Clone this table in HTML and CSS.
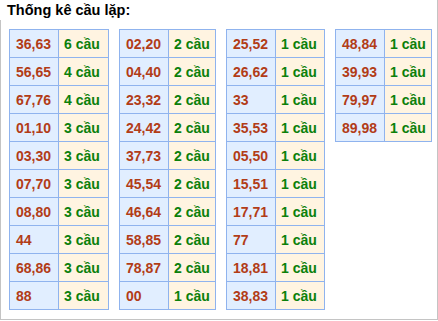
FILE: index.html
```html
<!DOCTYPE html>
<html lang="vi">
<head>
<meta charset="utf-8">
<link rel="stylesheet" href="styles.css">
</head>
<body>
<div class="box">
  <div class="title">Thống kê cầu lặp:</div>
  <div class="tables">
    <table class="t t1">
      <tr><td class="n">36,63</td><td class="c">6 cầu</td></tr>
      <tr><td class="n">56,65</td><td class="c">4 cầu</td></tr>
      <tr><td class="n">67,76</td><td class="c">4 cầu</td></tr>
      <tr><td class="n">01,10</td><td class="c">3 cầu</td></tr>
      <tr><td class="n">03,30</td><td class="c">3 cầu</td></tr>
      <tr><td class="n">07,70</td><td class="c">3 cầu</td></tr>
      <tr><td class="n">08,80</td><td class="c">3 cầu</td></tr>
      <tr><td class="n">44</td><td class="c">3 cầu</td></tr>
      <tr><td class="n">68,86</td><td class="c">3 cầu</td></tr>
      <tr><td class="n">88</td><td class="c">3 cầu</td></tr>
    </table>
    <table class="t t2">
      <tr><td class="n">02,20</td><td class="c">2 cầu</td></tr>
      <tr><td class="n">04,40</td><td class="c">2 cầu</td></tr>
      <tr><td class="n">23,32</td><td class="c">2 cầu</td></tr>
      <tr><td class="n">24,42</td><td class="c">2 cầu</td></tr>
      <tr><td class="n">37,73</td><td class="c">2 cầu</td></tr>
      <tr><td class="n">45,54</td><td class="c">2 cầu</td></tr>
      <tr><td class="n">46,64</td><td class="c">2 cầu</td></tr>
      <tr><td class="n">58,85</td><td class="c">2 cầu</td></tr>
      <tr><td class="n">78,87</td><td class="c">2 cầu</td></tr>
      <tr><td class="n">00</td><td class="c">1 cầu</td></tr>
    </table>
    <table class="t t3">
      <tr><td class="n">25,52</td><td class="c">1 cầu</td></tr>
      <tr><td class="n">26,62</td><td class="c">1 cầu</td></tr>
      <tr><td class="n">33</td><td class="c">1 cầu</td></tr>
      <tr><td class="n">35,53</td><td class="c">1 cầu</td></tr>
      <tr><td class="n">05,50</td><td class="c">1 cầu</td></tr>
      <tr><td class="n">15,51</td><td class="c">1 cầu</td></tr>
      <tr><td class="n">17,71</td><td class="c">1 cầu</td></tr>
      <tr><td class="n">77</td><td class="c">1 cầu</td></tr>
      <tr><td class="n">18,81</td><td class="c">1 cầu</td></tr>
      <tr><td class="n">38,83</td><td class="c">1 cầu</td></tr>
    </table>
    <table class="t t4">
      <tr><td class="n">48,84</td><td class="c">1 cầu</td></tr>
      <tr><td class="n">39,93</td><td class="c">1 cầu</td></tr>
      <tr><td class="n">79,97</td><td class="c">1 cầu</td></tr>
      <tr><td class="n">89,98</td><td class="c">1 cầu</td></tr>
    </table>
  </div>
</div>
</body>
</html>
```
FILE: styles.css
```css
html, body {
  margin: 0;
  padding: 0;
  background: #fff;
}
body {
  font-family: "Liberation Sans", Arial, sans-serif;
}
.box {
  width: 438px;
  height: 320px;
  box-sizing: border-box;
  border: 1px solid #c4c4c4;
  border-top: none;
}
.title {
  font-size: 14.5px;
  font-weight: bold;
  line-height: 17px;
  color: #000;
  background: #fff;
  margin-left: -1px;
  padding: 2px 0 0 7px;
  height: 20px;
  box-sizing: border-box;
  width: 140px;
}
.tables {
  display: flex;
  align-items: flex-start;
  gap: 10px;
  padding-left: 8px;
  margin-top: 9px;
}
.t {
  border-collapse: collapse;
  table-layout: fixed;
}
.t tr {
  height: 28px;
}
.t td {
  border: 1px solid #8fb3ee;
  padding: 0 0 0 6px;
  font-size: 14px;
  font-weight: bold;
  white-space: nowrap;
  box-sizing: border-box;
}
.t .n {
  background: #e1eeff;
  color: #b23c17;
  width: 49px;
}
.t .c {
  background: #fff4e1;
  color: #0b800b;
  padding-left: 5px;
}
.t1 { width: 100px; }
.t2 { width: 97px; }
.t3 { width: 99px; }
.t4 { width: 97px; }
```
